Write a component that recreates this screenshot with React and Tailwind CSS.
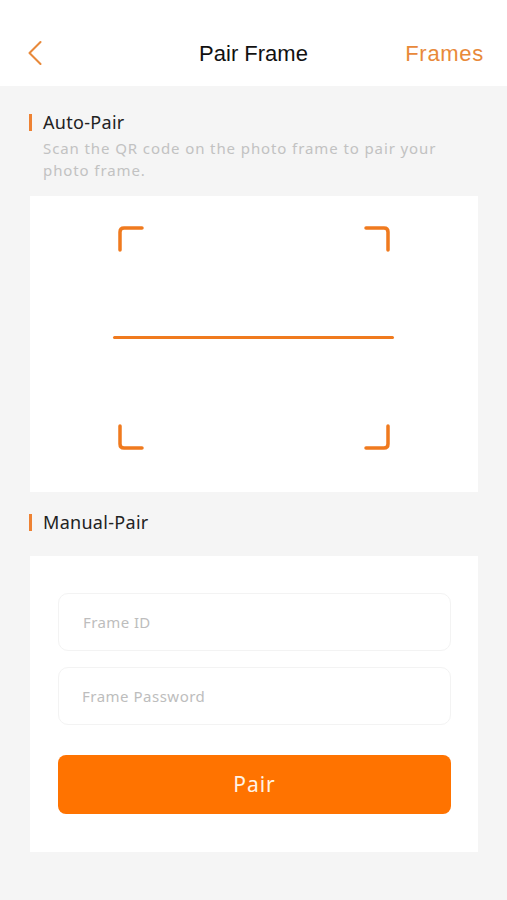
import { ChevronLeft } from 'lucide-react'

const body = { fontFamily: '"Noto Sans", "Open Sans", sans-serif' }
const head = { fontFamily: '"Liberation Sans", Arial, sans-serif' }

function Corner({ d }) {
  return (
    <svg width="26" height="26" viewBox="0 0 26 26">
      <path d={d} fill="none" stroke="#f07a1e" strokeWidth="3.5" strokeLinecap="round" />
    </svg>
  )
}

function SectionTitle({ children }) {
  return (
    <div className="flex items-center gap-[11px] pl-[29px]">
      <span className="h-[17px] w-[3px] bg-[#ee8233]" />
      <span className="text-[18px] leading-[24px] tracking-[0.3px] text-[#222]">{children}</span>
    </div>
  )
}

export default function App() {
  return (
    <div className="flex min-h-[900px] w-[507px] flex-col bg-[#f5f5f5]" style={body}>
      <header className="relative flex h-[86px] items-center justify-center bg-white pt-[20px]">
        <ChevronLeft className="absolute left-[13px] top-[31px] text-[#e8893a]" size={44} strokeWidth={1.15} />
        <h1 className="text-[22px] text-[#111]" style={head}>
          Pair Frame
        </h1>
        <span className="absolute right-[23px] top-[37px] text-[22px] tracking-[0.7px] text-[#e8893a]" style={head}>
          Frames
        </span>
      </header>

      <div className="pt-[24px]">
        <SectionTitle>Auto-Pair</SectionTitle>
        <p className="mt-[3px] pl-[43px] pr-[50px] text-[15px] leading-[22px] tracking-[0.9px] text-[#c2c2c2]">
          Scan the QR code on the photo frame to pair your photo frame.
        </p>
      </div>

      <div className="ml-[30px] mr-[29px] mt-[15px] flex h-[296px] flex-col bg-white px-[85px] pt-[30px]">
        <div className="flex justify-between px-[3px]">
          <Corner d="M2 24 V6 Q2 2 6 2 H24" />
          <Corner d="M2 2 H20 Q24 2 24 6 V24" />
        </div>
        <div className="mt-[84px] h-[3px] rounded-full bg-[#f07a1e]" style={{ marginLeft: -2, marginRight: -1 }} />
        <div className="mt-[85px] flex justify-between px-[3px]">
          <Corner d="M2 2 V20 Q2 24 6 24 H24" />
          <Corner d="M24 2 V20 Q24 24 20 24 H2" />
        </div>
      </div>

      <div className="mt-[18px]">
        <SectionTitle>Manual-Pair</SectionTitle>
      </div>

      <div className="ml-[30px] mr-[29px] mt-[22px] flex h-[296px] flex-col bg-white pl-[28px] pr-[27px] pt-[37px]">
        <div className="flex h-[58px] items-center rounded-[10px] border border-[#f3f3f3] pl-[24px] text-[15px] tracking-[0.4px] text-[#bdbdbd]">
          Frame ID
        </div>
        <div className="mt-[16px] flex h-[58px] items-center rounded-[10px] border border-[#f3f3f3] pl-[23px] text-[15px] tracking-[0.5px] text-[#bdbdbd]">
          Frame Password
        </div>
        <button className="mt-[30px] flex h-[59px] items-center justify-center rounded-[8px] bg-[#ff7300] text-[21px] tracking-[1px] text-[#fff3e6]">
          Pair
        </button>
      </div>
    </div>
  )
}
